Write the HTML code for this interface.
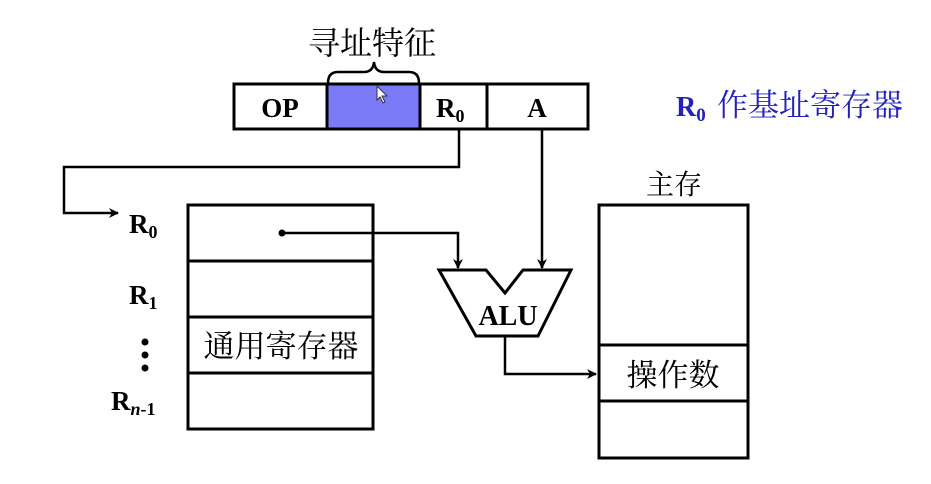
<!DOCTYPE html>
<html><head><meta charset="utf-8"><style>
body{margin:0;background:#fff;width:931px;height:479px;overflow:hidden}
svg text{font-family:"Liberation Serif","Noto Serif CJK SC",serif}
.cj{font-family:"Liberation Serif","Noto Serif CJK SC",serif}
</style></head><body>
<svg width="931" height="479" viewBox="0 0 931 479" xmlns="http://www.w3.org/2000/svg">
<defs><marker id="ar" markerWidth="10" markerHeight="10" refX="9" refY="5" orient="auto" markerUnits="userSpaceOnUse"><path d="M0,0 L10,5 L0,10 L3,5 Z" fill="#000"/></marker></defs>
<g stroke="#000" stroke-width="3" fill="none">
<rect x="327" y="84" width="93" height="45" fill="#7b7bf8"/>
<rect x="234" y="84" width="354" height="45"/>
<line x1="327" y1="84" x2="327" y2="129"/>
<line x1="420" y1="84" x2="420" y2="129"/>
<line x1="487" y1="84" x2="487" y2="129"/>
<path d="M328,83 Q328,72 338,72 L364,72 Q373,72 374,62 Q375,72 384,72 L409,72 Q419,72 419,83" stroke-width="2.5"/>
<rect x="188" y="205" width="185" height="224"/>
<line x1="188" y1="261" x2="373" y2="261"/>
<line x1="188" y1="317" x2="373" y2="317"/>
<line x1="188" y1="373" x2="373" y2="373"/>
<rect x="599" y="205" width="149" height="253"/>
<line x1="599" y1="345" x2="748" y2="345"/>
<line x1="599" y1="401" x2="748" y2="401"/>
<path d="M459,130 L459,167 L64,167 L64,213 L118,213" marker-end="url(#ar)" stroke-width="2.5"/>
<path d="M282,233 L458,233 L458,268" marker-end="url(#ar)" stroke-width="2.5"/>
<path d="M542,130 L542,268" marker-end="url(#ar)" stroke-width="2.5"/>
<path d="M439,270 L486,270 L505,293 L523,270 L571,270 L538,336 L476,336 Z" stroke-width="3"/>
<path d="M505,336 L505,374 L596,374" marker-end="url(#ar)" stroke-width="2.5"/>
</g>
<circle cx="282" cy="233" r="3.5" fill="#000"/>
<path d="M377,86 L377,100 L380,97 L383,103 L385,102 L382,96 L387,96 Z" fill="#fff" stroke="#333" stroke-width="1"/>
<text x="372" y="54" font-size="32" text-anchor="middle" class="cj">寻址特征</text>
<text x="280" y="117" font-size="27" font-weight="bold" text-anchor="middle">OP</text>
<text x="436" y="117" font-size="27" font-weight="bold">R<tspan font-size="18" dy="5">0</tspan></text>
<text x="537" y="117" font-size="27" font-weight="bold" text-anchor="middle">A</text>
<text x="676" y="116" font-size="28" font-weight="bold" fill="#2222bb">R<tspan font-size="19" dy="5">0</tspan></text>
<text x="717" y="116" font-size="31" fill="#2222bb" class="cj">作基址寄存器</text>
<text x="674" y="194" font-size="28" text-anchor="middle" class="cj">主存</text>
<text x="129" y="233" font-size="27" font-weight="bold">R<tspan font-size="18" dy="5">0</tspan></text>
<text x="129" y="304" font-size="27" font-weight="bold">R<tspan font-size="18" dy="5">1</tspan></text>
<circle cx="145" cy="342" r="3.5"/><circle cx="145" cy="355" r="3.5"/><circle cx="145" cy="368" r="3.5"/>
<text x="111" y="410" font-size="27" font-weight="bold">R<tspan font-size="18" dy="5" font-style="italic">n</tspan><tspan font-size="18">-1</tspan></text>
<text x="281" y="357" font-size="31" text-anchor="middle" class="cj">通用寄存器</text>
<text x="673" y="386" font-size="31" text-anchor="middle" class="cj">操作数</text>
<text x="508" y="325" font-size="28" font-weight="bold" text-anchor="middle">ALU</text>
</svg>
</body></html>
